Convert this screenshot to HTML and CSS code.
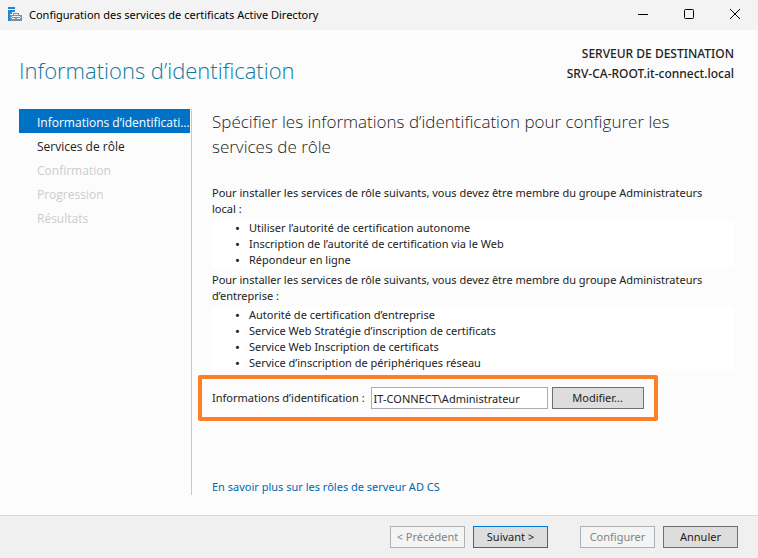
FILE: index.html
```html
<!DOCTYPE html>
<html lang="fr">
<head>
  <meta charset="utf-8">
  <title>Configuration des services de certificats Active Directory</title>
  <meta name="viewport" content="width=device-width, initial-scale=1">
  <link rel="stylesheet" href="styles.css">
</head>
<body>
  <header class="titlebar">
    <svg class="app-icon" width="16" height="16" viewBox="0 0 16 16" aria-hidden="true">
      <path fill="#1b87d9" d="M1 0h7v2H1zM1 3h7v2H5v2H3v7H1z"/>
      <path fill="#7590a9" d="M6 6h6v2h3v6H3V8h3z"/>
      <path fill="#f3f3f3" d="M7 7h4v1H7zM5 9h8v1h-8zM4 10h1v1H4zM13 10h1v1h-1zM5 11h3v1H5zM10 11h3v1h-3z"/>
    </svg>
    <span class="app-title">Configuration des services de certificats Active Directory</span>
    <div class="window-buttons">
      <button type="button" aria-label="Réduire">
        <svg width="12" height="12" viewBox="0 0 12 12"><path d="M1 5.500h10"/></svg>
      </button>
      <button type="button" aria-label="Agrandir">
        <svg width="12" height="12" viewBox="0 0 12 12"><rect x="1.500" y="0.500" width="9" height="9" rx="1"/></svg>
      </button>
      <button type="button" aria-label="Fermer">
        <svg width="12" height="12" viewBox="0 0 12 12"><path d="M1 0l10 10M11 0L1 10"/></svg>
      </button>
    </div>
  </header>

  <div class="page-head">
    <h1>Informations d’identification</h1>
    <div class="destination">
      <div>SERVEUR DE DESTINATION</div>
      <div>SRV-CA-ROOT.it-connect.local</div>
    </div>
  </div>

  <div class="wizard">
    <nav class="steps">
      <a class="step current" href="#">Informations d’identification</a>
      <a class="step" href="#">Services de rôle</a>
      <span class="step disabled">Confirmation</span>
      <span class="step disabled">Progression</span>
      <span class="step disabled">Résultats</span>
    </nav>

    <main class="content">
      <h2>Spécifier les informations d’identification pour configurer les services de rôle</h2>

      <p>Pour installer les services de rôle suivants, vous devez être membre du groupe Administrateurs local&nbsp;:</p>
      <ul>
        <li>Utiliser l’autorité de certification autonome</li>
        <li>Inscription de l’autorité de certification via le Web</li>
        <li>Répondeur en ligne</li>
      </ul>

      <p>Pour installer les services de rôle suivants, vous devez être membre du groupe Administrateurs d’entreprise&nbsp;:</p>
      <ul>
        <li>Autorité de certification d’entreprise</li>
        <li>Service Web Stratégie d’inscription de certificats</li>
        <li>Service Web Inscription de certificats</li>
        <li>Service d’inscription de périphériques réseau</li>
      </ul>

      <div class="credentials">
        <label for="account">Informations d’identification :</label>
        <input id="account" type="text" value="IT-CONNECT\Administrateur">
        <button class="btn" type="button">Modifier...</button>
      </div>

      <a class="more" href="#">En savoir plus sur les rôles de serveur AD CS</a>
    </main>
  </div>

  <footer class="actions">
    <button class="btn" type="button" disabled>&lt; Précédent</button>
    <button class="btn default" type="button">Suivant &gt;</button>
    <button class="btn apart" type="button" disabled>Configurer</button>
    <button class="btn" type="button">Annuler</button>
  </footer>
</body>
</html>
```
FILE: styles.css
```css
* {
  box-sizing: border-box;
}

body {
  margin: 0;
  min-height: 100vh;
  display: flex;
  flex-direction: column;
  font-family: "Noto Sans", "Open Sans", sans-serif;
  font-size: 11px;
  line-height: 16px;
  color: #222;
  background: #fcfcfc;
}

h1, h2, p, ul {
  margin: 0;
}

button, input {
  font: inherit;
  color: inherit;
}

.titlebar {
  display: flex;
  align-items: center;
  height: 30px;
  padding-left: 7px;
  background: #f3f3f3;
  color: #000;
}

.app-title {
  margin-left: 6px;
}

.window-buttons {
  display: flex;
  margin-left: auto;
}

.window-buttons button {
  display: flex;
  align-items: center;
  justify-content: center;
  width: 46px;
  height: 30px;
  padding: 0;
  border: 0;
  background: none;
}

.window-buttons svg {
  fill: none;
  stroke: #000;
}

.page-head {
  display: flex;
  justify-content: space-between;
  padding: 14px 24px 0 19px;
}

h1 {
  font-family: "Open Sans", sans-serif;
  font-size: 22px;
  font-weight: 300;
  line-height: 52px;
  color: #0f7a9f;
}

.destination {
  font-size: 12px;
  font-weight: 500;
  line-height: 20px;
  text-align: right;
}

.wizard {
  flex: 1;
  display: flex;
  padding: 13px 24px 20px 19px;
}

.steps {
  flex: none;
  width: 173px;
  padding-right: 1px;
  border-right: 1px solid #c8c8c8;
}

.step {
  display: block;
  height: 24px;
  padding-left: 18px;
  overflow: hidden;
  font-family: "Open Sans", sans-serif;
  font-size: 12px;
  line-height: 27px;
  text-overflow: ellipsis;
  white-space: nowrap;
  text-decoration: none;
  color: #222;
}

.step.current {
  color: #fff;
  background: #0072c6;
}

.step.disabled {
  color: #ccc;
}

.content {
  flex: 1;
  display: flex;
  flex-direction: column;
  align-items: stretch;
  padding-left: 20px;
}

h2 {
  margin-bottom: 26px;
  font-family: "Open Sans", sans-serif;
  font-size: 17px;
  font-weight: 300;
  line-height: 25px;
}

.content ul {
  margin: 3px 0 4px;
  padding: 0;
  list-style: none;
  background: #fff;
}

.content li {
  display: flex;
}

.content li::before {
  content: "•";
  width: 14px;
  margin-left: 23px;
  font-size: 13px;
}

.credentials {
  display: flex;
  align-items: center;
  align-self: flex-start;
  margin-left: -14px;
  padding: 8px 10px;
  border: 4px solid #ff7f27;
  border-radius: 2px;
}

.credentials input {
  width: 177px;
  height: 22px;
  margin: 0 4px 0 6px;
  padding: 0 2px;
  border: 1px solid #abadb3;
  background: #fff;
}

.credentials .btn {
  width: 92px;
}

.btn {
  width: 75px;
  height: 22px;
  padding: 0;
  border: 1px solid #707070;
  background: #ddd;
  white-space: nowrap;
}

.btn.default {
  border-color: #0078d7;
}

.btn:disabled {
  border-color: #adb2b5;
  background: #f4f4f4;
  color: #838383;
}

.more {
  margin-top: auto;
  color: #0066b0;
  text-decoration: none;
}

.actions {
  display: flex;
  justify-content: flex-end;
  gap: 8px;
  padding: 10px 20px;
  border-top: 1px solid #d9d9d9;
  background: #f0f0f0;
}

.actions .apart {
  margin-left: 24px;
}
```
